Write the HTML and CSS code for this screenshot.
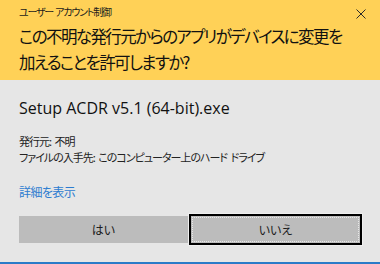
FILE: index.html
```html
<!DOCTYPE html>
<html lang="ja">
<head>
<meta charset="utf-8">
<title>ユーザー アカウント制御</title>
<link rel="stylesheet" href="styles.css">
</head>
<body>
<div class="dialog">
  <header class="banner">
    <div class="titlebar">
      <span class="title">ユーザー アカウント制御</span>
      <svg class="close" width="10" height="10" viewBox="0 0 10 10" aria-label="閉じる">
        <path d="M0.5 0.5 L9.5 9.5 M9.5 0.5 L0.5 9.5" stroke="#2b2b2b" stroke-width="1" fill="none"/>
      </svg>
    </div>
    <h1 class="question">この不明な発行元からのアプリがデバイスに変更を<br>加えることを許可しますか?</h1>
  </header>
  <main class="content">
    <p class="app">Setup ACDR v5.1 (64-bit).exe</p>
    <p class="meta">発行元: 不明<br>ファイルの入手先: このコンピューター上のハード ドライブ</p>
    <a class="details" href="#">詳細を表示</a>
    <div class="buttons">
      <button class="btn">はい</button>
      <button class="btn focused">いいえ</button>
    </div>
  </main>
</div>
</body>
</html>
```

FILE: styles.css
```css
html, body {
  margin: 0;
  padding: 0;
}
body {
  width: 380px;
  height: 264px;
  overflow: hidden;
  background: #e6e6e6;
  font-family: "Noto Sans CJK JP", sans-serif;
  font-feature-settings: "palt";
  color: #1a1a1a;
}
.dialog {
  box-sizing: border-box;
  height: 264px;
  display: flex;
  flex-direction: column;
  border-bottom: 2px solid #2a7bc8;
}
.banner {
  height: 80px;
  box-sizing: border-box;
  background: #ffd157;
  padding: 4px 14px 0 19px;
}
.titlebar {
  display: flex;
  align-items: flex-start;
  justify-content: space-between;
  height: 16px;
}
.title {
  font-size: 10px;
  letter-spacing: -1.2px;
  word-spacing: 1px;
  line-height: 16px;
  color: #1a1a1a;
}
.close {
  display: block;
  margin-top: 5px;
}
.question {
  margin: 3px 0 0 0;
  font-size: 16.5px;
  letter-spacing: -1.6px;
  font-weight: normal;
  line-height: 26px;
  white-space: nowrap;
  color: #111;
}
.content {
  flex: 1;
  padding: 18px 17px 0 19px;
}
.app {
  margin: 0;
  font-family: "Open Sans", "Noto Sans CJK JP", sans-serif;
  font-size: 16px;
  line-height: 20px;
  color: #111;
}
.meta {
  margin: 16px 0 0 0;
  font-size: 11px;
  letter-spacing: -1px;
  word-spacing: 2px;
  line-height: 15.5px;
  color: #222;
}
.details {
  display: block;
  margin-top: 19px;
  font-size: 12px;
  letter-spacing: -0.6px;
  line-height: 16px;
  color: #2d7cd0;
  text-decoration: none;
}
.buttons {
  display: flex;
  gap: 3px;
  margin-top: 16px;
}
.btn {
  position: relative;
  width: 169px;
  height: 27px;
  padding: 0;
  border: none;
  background: #bcbcbc;
  font-family: "Noto Sans CJK JP", sans-serif;
  font-feature-settings: "palt";
  font-size: 12px;
  color: #1a1a1a;
}
.btn.focused {
  outline: 2px solid #000;
  box-shadow: 0 0 0 3px #efefef;
}
.btn.focused::after {
  content: "";
  position: absolute;
  inset: 1px;
  border: 1px dotted #e8e8e8;
}
```
